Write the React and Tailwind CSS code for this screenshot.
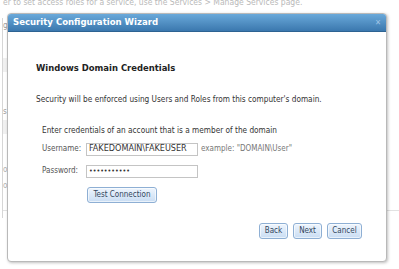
import React from 'react';

const font = { fontFamily: '"DejaVu Sans Condensed", "DejaVu Sans", sans-serif' };

const Btn = ({ children, className = '' }) => (
  <button
    className={`h-[16px] rounded-[3px] border border-[#8eafd4] bg-gradient-to-b from-[#eef5fd] to-[#c9ddf3] text-[8px] leading-none text-[#33465c] shadow-[0_0_0_1px_rgba(255,255,255,0.6)_inset] ${className}`}
  >
    {children}
  </button>
);

const Field = ({ label, value, type = 'text', textSize = 'text-[9px]' }) => (
  <div className="flex items-center">
    <span className="w-[44px] text-[8px] text-[#555]">{label}</span>
    <input
      type={type}
      defaultValue={value}
      readOnly
      className={`h-[13px] w-[112px] border border-[#c4c4c4] bg-white px-[2px] text-[#333] outline-none ${textSize}`}
      style={font}
    />
  </div>
);

const App = () => {
  return (
    <div className="relative h-[269px] w-[399px] overflow-hidden bg-white" style={font}>
      {/* page behind the wizard, faded */}
      <div className="text-[#b9b9b9]">
        <div className="-mt-[4px] h-[10px] whitespace-nowrap pl-[3px] text-[8.5px]">
          er to set access roles for a service, use the Services &gt; Manage Services page.
        </div>
        <div className="ml-[2px] mt-[12px] h-[200px] w-[397px] border-l border-[#d6d6d6]">
          <div className="pt-[2px] text-[8px] text-[#9a9a9a]">g</div>
          <div className="mt-[26px] h-[14px] w-[8px] bg-[#f0f0f0]" />
          <div className="mt-[34px] text-[8px] text-[#9a9a9a]">s</div>
          <div className="mt-[2px] h-[14px] w-[8px] bg-[#f0f0f0]" />
          <div className="mt-[30px] text-[8px] text-[#b0b0b0]">ol</div>
          <div className="mt-[4px] text-[8px] text-[#b0b0b0]">ok</div>
          <div className="mt-[18px] h-px w-full bg-[#e2e2e2]" />
        </div>
      </div>

      {/* wizard dialog */}
      <div className="absolute left-[7px] top-[13px] flex h-[249px] w-[380px] flex-col overflow-hidden rounded-[4px] border border-[#b9b9b9] bg-white shadow-[1px_1px_3px_rgba(0,0,0,0.25)]">
        <div className="flex h-[18px] items-center justify-between border-b border-[#2d6392] bg-gradient-to-b from-[#6aa9da] to-[#3b78ae] pl-[5px] pr-[5px]">
          <span className="text-[9.5px] font-bold text-white">Security Configuration Wizard</span>
          <span className="text-[8px] leading-none text-[#9ec3e4]">✕</span>
        </div>

        <div className="flex flex-1 flex-col pl-[28px] pr-[24px]">
          <h1 className="mt-[29px] text-[9.4px] font-bold text-[#222]">Windows Domain Credentials</h1>
          <p className="mt-[18px] text-[8.2px] text-[#333]">
            Security will be enforced using Users and Roles from this computer's domain.
          </p>

          <div className="mt-[19px] pl-[6px]">
            <p className="text-[8.2px] text-[#333]">Enter credentials of an account that is a member of the domain</p>
            <div className="mt-[6px] flex items-center">
              <Field label="Username:" value="FAKEDOMAIN\FAKEUSER" />
              <span className="ml-[3px] text-[8px] text-[#777]">example: "DOMAIN\User"</span>
            </div>
            <div className="mt-[9px]">
              <Field label="Password:" value="fakepasswrd" type="password" textSize="text-[7px]" />
            </div>
            <Btn className="ml-[45px] mt-[9px] w-[70px]">Test Connection</Btn>
          </div>

          <div className="mt-auto mb-[22px] flex justify-end gap-[5px]">
            <Btn className="w-[29px]">Back</Btn>
            <Btn className="w-[29px]">Next</Btn>
            <Btn className="w-[35px]">Cancel</Btn>
          </div>
        </div>
      </div>
    </div>
  );
};

export default App;
